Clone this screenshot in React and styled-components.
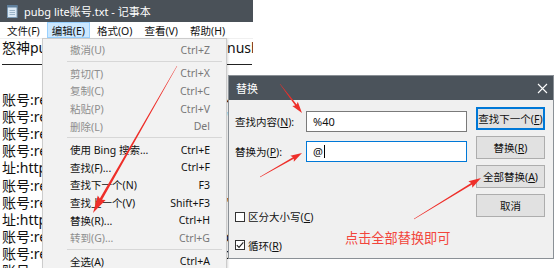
import React from "react";
import styled, { createGlobalStyle } from "styled-components";

const GlobalStyle = createGlobalStyle`
  html, body { margin: 0; padding: 0; background: #fff; }
  body {
    font-family: "Noto Sans", "Noto Sans CJK SC", sans-serif;
    -webkit-font-smoothing: antialiased;
  }
`;

const Screen = styled.div`
  position: relative;
  width: 555px;
  height: 268px;
  overflow: hidden;
  background: #fff;
`;

const Notepad = styled.div`
  position: relative;
  width: 253px;
  height: 268px;
  display: flex;
  flex-direction: column;
  background: #fff;
`;

const TitleBar = styled.div`
  height: 22px;
  flex: none;
  display: flex;
  align-items: center;
  gap: 6px;
  padding-left: 6px;
  background: #4a5158;
  color: #fff;
  font-size: 11px;
`;

const MenuBar = styled.div`
  height: 16px;
  flex: none;
  display: flex;
  padding-left: 2px;
  gap: 2px;
  font-size: 10.5px;
  color: #111;
  border-bottom: 1px solid #f0f0f0;
`;

const MenuTitle = styled.div`
  display: flex;
  align-items: center;
  padding: 0 4px;
  border: 1px solid ${(p) => (p.$open ? "#99d1ff" : "transparent")};
  background: ${(p) => (p.$open ? "#cce8ff" : "transparent")};
`;

const TextArea = styled.div`
  flex: 1;
  overflow: hidden;
  padding-left: 2px;
  font-family: "Noto Sans", "Noto Sans CJK SC", sans-serif;
  font-size: 14px;
  line-height: 17.2px;
  color: #111;
  white-space: nowrap;
`;

const Line = styled.div`
  height: 17.2px;
  display: flex;
  align-items: center;
`;

const Clip = styled.span`
  flex: none;
  display: inline-block;
  width: ${(p) => p.$w}px;
  overflow: hidden;
`;

const Rule = styled.div`
  width: 250px;
  height: 1px;
  background: #222;
`;

const Dropdown = styled.div`
  position: absolute;
  top: 38px;
  left: 42px;
  width: 183px;
  padding: 2px 0;
  background: #f2f2f2;
  border: 1px solid #cccccc;
  box-shadow: 1px 1px 2px rgba(0, 0, 0, 0.15);
  font-size: 10.5px;
  z-index: 2;
`;

const Item = styled.div`
  height: 17.6px;
  display: grid;
  grid-template-columns: 1fr auto;
  align-items: center;
  padding: 0 16px 0 27px;
  color: ${(p) => (p.$disabled ? "#8d8d8d" : "#111")};
`;

const Shortcut = styled.span`
  font-family: "Noto Sans", sans-serif;
  font-size: 10.5px;
  color: ${(p) => (p.$disabled ? "#777" : "#111")};
`;

const Separator = styled.div`
  height: 6px;
  display: flex;
  align-items: center;
  padding: 0 4px 0 24px;
  &::after {
    content: "";
    flex: 1;
    height: 1px;
    background: #d7d7d7;
  }
`;

const Dialog = styled.div`
  position: absolute;
  left: 229px;
  top: 76px;
  width: 324px;
  height: 182px;
  display: flex;
  flex-direction: column;
  background: #f0f0f0;
  box-shadow: 0 0 0 1px #8a9096;
  z-index: 3;
`;

const DialogTitle = styled.div`
  height: 24px;
  flex: none;
  display: flex;
  align-items: center;
  justify-content: space-between;
  padding: 0 5px 0 7px;
  background: #4b535b;
  color: #fff;
  font-size: 11px;
`;

const DialogBody = styled.div`
  position: relative;
  flex: 1;
  display: flex;
  gap: 9px;
  padding: 7px 7px 0 6px;
  font-size: 10.5px;
  color: #111;
`;

const LeftCol = styled.div`
  width: 232px;
  display: flex;
  flex-direction: column;
  padding-top: 3.5px;
`;

const Field = styled.div`
  height: 21px;
  display: flex;
  align-items: center;
  margin-bottom: 9px;
`;

const FieldLabel = styled.span`
  width: 71px;
  u { text-underline-offset: 1px; }
`;

const Input = styled.div`
  box-sizing: border-box;
  width: 161px;
  height: 21px;
  display: flex;
  align-items: center;
  padding-left: 6px;
  background: #fff;
  border: 1px solid ${(p) => (p.$focus ? "#0078d7" : "#7a7a7a")};
  font-size: 11px;
`;

const Caret = styled.span`
  display: inline-block;
  width: 1px;
  height: 13px;
  margin-left: 1px;
  background: #000;
`;

const Check = styled.div`
  display: flex;
  align-items: center;
  height: 14px;
  margin-top: ${(p) => p.$top}px;
`;

const Box = styled.span`
  box-sizing: border-box;
  width: 10px;
  height: 10px;
  margin-right: 3px;
  border: 1px solid #333;
  background: #fff;
  display: flex;
  align-items: center;
  justify-content: center;
`;

const RightCol = styled.div`
  width: 69px;
  display: flex;
  flex-direction: column;
  gap: 6px;
`;

const Button = styled.div`
  box-sizing: border-box;
  height: 23px;
  display: flex;
  align-items: center;
  justify-content: center;
  background: #e1e1e1;
  border: 1px solid ${(p) => (p.$default ? "#0078d7" : "#adadad")};
  box-shadow: ${(p) => (p.$default ? "inset 0 0 0 1px #0078d7" : "none")};
  font-size: 10.5px;
`;

const Note = styled.div`
  position: absolute;
  left: 116px;
  top: 130px;
  font-family: "Noto Sans CJK SC", sans-serif;
  font-size: 13.2px;
  line-height: 16px;
  color: #f2453b;
`;

const Arrows = styled.svg`
  position: absolute;
  left: 0;
  top: 0;
  z-index: 5;
  pointer-events: none;
`;

function arrowPoints([x1, y1], [x2, y2], w0, w1, headLen, headW) {
  const dx = x2 - x1;
  const dy = y2 - y1;
  const L = Math.hypot(dx, dy);
  const ux = dx / L;
  const uy = dy / L;
  const nx = -uy;
  const ny = ux;
  const bx = x2 - ux * headLen;
  const by = y2 - uy * headLen;
  const pts = [
    [x1 + (nx * w0) / 2, y1 + (ny * w0) / 2],
    [bx + (nx * w1) / 2, by + (ny * w1) / 2],
    [bx + (nx * headW) / 2 - ux * 1.5, by + (ny * headW) / 2 - uy * 1.5],
    [x2, y2],
    [bx - (nx * headW) / 2 - ux * 1.5, by - (ny * headW) / 2 - uy * 1.5],
    [bx - (nx * w1) / 2, by - (ny * w1) / 2],
    [x1 - (nx * w0) / 2, y1 - (ny * w0) / 2],
  ];
  return pts.map((p) => p.map((v) => v.toFixed(1)).join(",")).join(" ");
}

const arrows = [
  { from: [177, 66], to: [93, 213], w0: 0.5, w1: 2.6, head: 16, hw: 9 },
  { from: [280, 84], to: [302, 113], w0: 0.4, w1: 1.8, head: 10, hw: 7 },
  { from: [260, 177], to: [302, 153], w0: 0.4, w1: 1.8, head: 10, hw: 7 },
  { from: [414, 219], to: [481, 178], w0: 0.4, w1: 1.8, head: 11, hw: 7.5 },
];

const menuItems = [
  { label: "撤消(U)", key: "Ctrl+Z", disabled: true },
  "sep",
  { label: "剪切(T)", key: "Ctrl+X", disabled: true },
  { label: "复制(C)", key: "Ctrl+C", disabled: true },
  { label: "粘贴(P)", key: "Ctrl+V", disabled: true },
  { label: "删除(L)", key: "Del", disabled: true },
  "sep",
  { label: "使用 Bing 搜索...", key: "Ctrl+E" },
  { label: "查找(F)...", key: "Ctrl+F" },
  { label: "查找下一个(N)", key: "F3" },
  { label: "查找上一个(V)", key: "Shift+F3" },
  { label: "替换(R)...", key: "Ctrl+H" },
  { label: "转到(G)...", key: "Ctrl+G", disabled: true },
  "sep",
  { label: "全选(A)", key: "Ctrl+A" },
];

const accountLines = [
  "账号:renshen0712----密码:qq8826341 rr",
  "账号:rexbb9981----密码:lpk229017 ''",
  "账号:reyui20156----密码:a1234567ii",
  "账号:remo77120----密码:zxc998812 nn",
  "址:https://accounts.pubg.com/r",
  "账号:reaa66551----密码:www12345 r",
  "账号:rekk33019----密码:pubg20191'",
  "址:https://accounts.pubg.com/c",
  "账号:ressd8871----密码:asd778812 c",
  "账号:rejj77621----密码:mmp00123 c",
  "账号:reop11092----密码:qaz88120 c",
];

function NotepadIcon() {
  return (
    <svg width="12" height="14" viewBox="0 0 12 14">
      <rect x="1.5" y="2" width="9.5" height="11.5" fill="#dbe9f5" stroke="#7d9bb5" />
      <rect x="1" y="1" width="10.5" height="2.5" fill="#5f7f9c" />
      <line x1="3.5" y1="6.5" x2="9" y2="6.5" stroke="#9bb4c8" />
      <line x1="3.5" y1="8.5" x2="9" y2="8.5" stroke="#9bb4c8" />
      <line x1="3.5" y1="10.5" x2="9" y2="10.5" stroke="#9bb4c8" />
    </svg>
  );
}

export default function App() {
  return (
    <Screen>
      <GlobalStyle />
      <Notepad>
        <TitleBar>
          <NotepadIcon />
          <span>pubg lite账号.txt - 记事本</span>
        </TitleBar>
        <MenuBar>
          <MenuTitle>文件(F)</MenuTitle>
          <MenuTitle $open>编辑(E)</MenuTitle>
          <MenuTitle>格式(O)</MenuTitle>
          <MenuTitle>查看(V)</MenuTitle>
          <MenuTitle>帮助(H)</MenuTitle>
        </MenuBar>
        <TextArea>
          <Line>
            <Clip $w={225}>怒神pubg lite账号分享（每日更新）bbb</Clip>
            nushb
          </Line>
          <Line>
            <Rule />
          </Line>
          <Line />
          {accountLines.map((t, i) => (
            <Line key={i}>{t}</Line>
          ))}
        </TextArea>

        <Dropdown>
          {menuItems.map((it, i) =>
            it === "sep" ? (
              <Separator key={i} />
            ) : (
              <Item key={i} $disabled={it.disabled}>
                <span>{it.label}</span>
                <Shortcut $disabled={it.disabled}>{it.key}</Shortcut>
              </Item>
            )
          )}
        </Dropdown>
      </Notepad>

      <Dialog>
        <DialogTitle>
          <span>替换</span>
          <svg width="11" height="11" viewBox="0 0 11 11">
            <path d="M1 1 L10 10 M10 1 L1 10" stroke="#fff" strokeWidth="1.1" />
          </svg>
        </DialogTitle>
        <DialogBody>
          <LeftCol>
            <Field>
              <FieldLabel>
                查找内容(<u>N</u>):
              </FieldLabel>
              <Input>%40</Input>
            </Field>
            <Field>
              <FieldLabel>
                替换为(<u>P</u>):
              </FieldLabel>
              <Input $focus>
                @<Caret />
              </Input>
            </Field>
            <Check $top={39}>
              <Box />
              <span>
                区分大小写(<u>C</u>)
              </span>
            </Check>
            <Check $top={14.5}>
              <Box>
                <svg width="8" height="8" viewBox="0 0 8 8">
                  <path d="M0.8 4.2 L3 6.4 L7.3 1.4" fill="none" stroke="#222" strokeWidth="1.1" />
                </svg>
              </Box>
              <span>
                循环(<u>R</u>)
              </span>
            </Check>
          </LeftCol>
          <RightCol>
            <Button $default>
              查找下一个(<u>F</u>)
            </Button>
            <Button>
              替换(<u>R</u>)
            </Button>
            <Button>
              全部替换(<u>A</u>)
            </Button>
            <Button>取消</Button>
          </RightCol>
          <Note>点击全部替换即可</Note>
        </DialogBody>
      </Dialog>

      <Arrows width="555" height="268" viewBox="0 0 555 268">
        {arrows.map((a, i) => (
          <polygon
            key={i}
            points={arrowPoints(a.from, a.to, a.w0, a.w1, a.head, a.hw)}
            fill="#ee2f2a"
          />
        ))}
      </Arrows>
    </Screen>
  );
}
